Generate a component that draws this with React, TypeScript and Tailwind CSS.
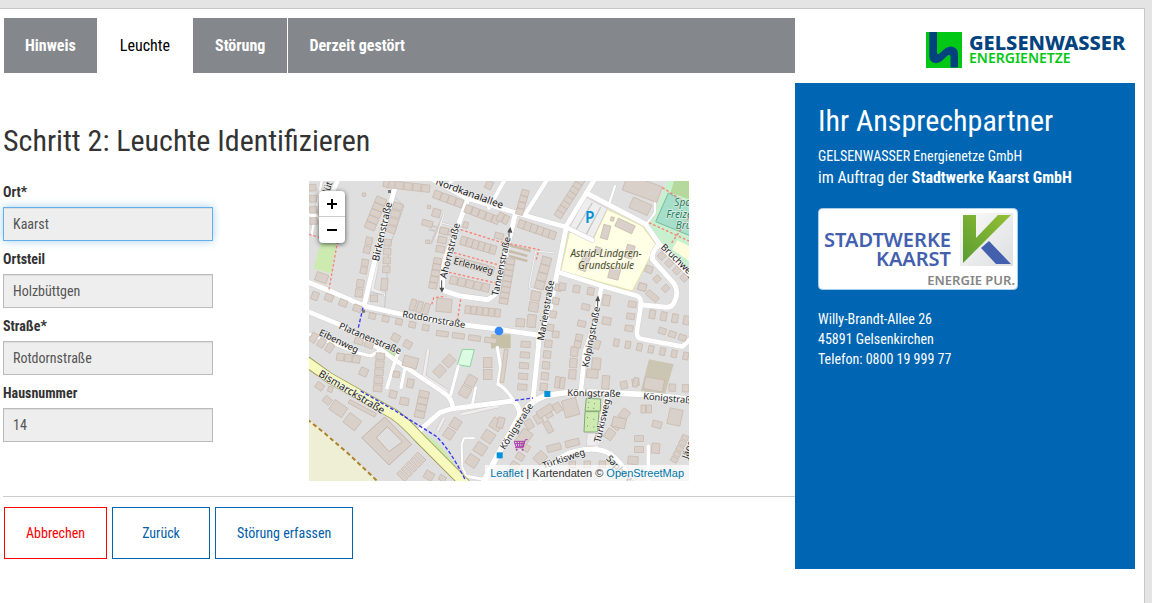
import React from "react";

type Pt = [number, number];
type Row = { from: Pt; to: Pt; n: number; w: number; h: number };

/* Map geometry is expressed in a 1140 x 900 drawing space. */
const rows: Row[] = [
  { from: [245, 10], to: [350, 22], n: 5, w: 24, h: 22 },
  { from: [385, 42], to: [450, 66], n: 4, w: 22, h: 24 },
  { from: [478, 85], to: [560, 116], n: 5, w: 20, h: 24 },
  { from: [464, 180], to: [552, 206], n: 6, w: 18, h: 26 },
  { from: [445, 240], to: [545, 268], n: 6, w: 18, h: 24 },
  { from: [434, 298], to: [530, 320], n: 5, w: 22, h: 24 },
  { from: [386, 240], to: [372, 314], n: 5, w: 24, h: 18 },
  { from: [405, 150], to: [394, 204], n: 3, w: 26, h: 20 },
  { from: [476, 386], to: [566, 396], n: 6, w: 16, h: 24 },
  { from: [215, 60], to: [184, 135], n: 5, w: 32, h: 20 },
  { from: [180, 180], to: [174, 206], n: 2, w: 20, h: 22 },
  { from: [168, 245], to: [164, 268], n: 2, w: 20, h: 20 },
  { from: [154, 308], to: [150, 336], n: 2, w: 22, h: 24 },
  { from: [266, 76], to: [246, 145], n: 4, w: 28, h: 20 },
  { from: [236, 185], to: [232, 265], n: 4, w: 22, h: 20 },
  { from: [648, 36], to: [632, 92], n: 4, w: 22, h: 18 },
  { from: [814, 0], to: [750, 100], n: 8, w: 24, h: 18 },
  { from: [638, 130], to: [730, 162], n: 6, w: 20, h: 24 },
  { from: [574, 108], to: [590, 116], n: 2, w: 16, h: 26 },
  { from: [604, 242], to: [584, 360], n: 8, w: 26, h: 17 },
  { from: [712, 240], to: [692, 312], n: 4, w: 28, h: 24 },
  { from: [680, 345], to: [674, 378], n: 2, w: 28, h: 28 },
  { from: [748, 320], to: [724, 440], n: 4, w: 20, h: 20 },
  { from: [760, 317], to: [845, 331], n: 3, w: 20, h: 22 },
  { from: [830, 378], to: [818, 428], n: 2, w: 24, h: 18 },
  { from: [970, 370], to: [960, 442], n: 3, w: 24, h: 18 },
  { from: [1020, 265], to: [1000, 318], n: 2, w: 22, h: 20 },
  { from: [1058, 225], to: [1126, 290], n: 4, w: 20, h: 20 },
  { from: [1044, 294], to: [1070, 322], n: 2, w: 20, h: 18 },
  { from: [1030, 400], to: [1132, 418], n: 4, w: 18, h: 26 },
  { from: [60, 350], to: [145, 382], n: 3, w: 24, h: 20 },
  { from: [190, 405], to: [350, 440], n: 5, w: 20, h: 18 },
  { from: [312, 372], to: [352, 384], n: 3, w: 16, h: 34 },
  { from: [14, 470], to: [62, 500], n: 3, w: 20, h: 28 },
  { from: [94, 528], to: [142, 535], n: 3, w: 22, h: 22 },
  { from: [214, 526], to: [206, 622], n: 5, w: 26, h: 20 },
  { from: [345, 640], to: [332, 700], n: 4, w: 30, h: 20 },
  { from: [420, 540], to: [392, 570], n: 2, w: 28, h: 32 },
  { from: [486, 600], to: [468, 632], n: 2, w: 30, h: 32 },
  { from: [536, 545], to: [536, 580], n: 2, w: 26, h: 30 },
  { from: [440, 728], to: [420, 758], n: 2, w: 28, h: 30 },
  { from: [400, 458], to: [545, 478], n: 4, w: 36, h: 16 },
  { from: [260, 470], to: [296, 490], n: 2, w: 24, h: 22 },
  { from: [150, 480], to: [180, 490], n: 2, w: 26, h: 20 },
  { from: [334, 830], to: [280, 885], n: 5, w: 34, h: 14 },
  { from: [562, 730], to: [490, 840], n: 4, w: 34, h: 32 },
  { from: [650, 490], to: [640, 618], n: 5, w: 28, h: 18 },
  { from: [718, 488], to: [704, 618], n: 5, w: 22, h: 22 },
  { from: [745, 604], to: [760, 606], n: 2, w: 14, h: 34 },
  { from: [796, 512], to: [790, 580], n: 3, w: 22, h: 28 },
  { from: [810, 470], to: [806, 490], n: 2, w: 20, h: 20 },
  { from: [922, 485], to: [1130, 525], n: 7, w: 16, h: 22 },
  { from: [945, 612], to: [980, 604], n: 2, w: 20, h: 22 },
  { from: [1060, 450], to: [1120, 470], n: 3, w: 22, h: 18 },
  { from: [1090, 620], to: [1130, 622], n: 2, w: 20, h: 22 },
  { from: [660, 730], to: [745, 680], n: 4, w: 22, h: 28 },
  { from: [946, 700], to: [902, 760], n: 3, w: 26, h: 30 },
  { from: [1003, 684], to: [1020, 684], n: 2, w: 14, h: 24 },
  { from: [990, 773], to: [990, 806], n: 2, w: 26, h: 18 },
  { from: [1128, 770], to: [1096, 836], n: 5, w: 20, h: 14 },
  { from: [735, 800], to: [790, 786], n: 2, w: 42, h: 20 },
  { from: [650, 800], to: [600, 880], n: 4, w: 24, h: 20 },
  { from: [790, 850], to: [880, 850], n: 3, w: 20, h: 20 },
  { from: [10, 20], to: [14, 120], n: 4, w: 22, h: 20 },
];

const singles: [number, number, number, number, number][] = [
  [165, 41, 10, 10, 10], [232, 6, 16, 24, 15], [38, 290, 36, 26, 20], [540, 12, 20, 24, 25], [360, 78, 10, 10, 10],
  [356, 182, 12, 10, 0], [355, 127, 32, 18, 15], [382, 96, 24, 24, 15], [405, 373, 46, 40, 5], [470, 132, 14, 18, 15],
  [195, 352, 22, 20, 0], [226, 310, 20, 36, 5], [18, 345, 20, 24, 20], [252, 640, 22, 22, 15], [286, 661, 26, 22, 10],
  [164, 573, 24, 24, 25], [262, 580, 20, 18, 10], [304, 543, 44, 32, 15], [304, 607, 20, 26, 10], [32, 616, 24, 20, 35],
  [88, 683, 46, 34, 35], [55, 658, 24, 20, 40], [130, 722, 44, 36, 38], [64, 625, 14, 16, 20], [160, 682, 90, 12, 28],
  [360, 884, 28, 24, 30], [400, 892, 20, 16, 30], [1000, 22, 110, 50, 20], [994, 76, 60, 34, 24], [948, 135, 56, 26, 25],
  [890, 153, 22, 42, 15], [910, 114, 10, 12, 15], [962, 212, 24, 40, 15], [916, 276, 32, 36, 15], [828, 242, 22, 56, 20],
  [868, 208, 22, 18, 20], [570, 165, 26, 18, 15], [634, 425, 26, 24, 5], [668, 420, 26, 38, 5], [892, 358, 22, 32, 10],
  [893, 420, 26, 22, 10], [1000, 318, 24, 22, 15], [1030, 345, 40, 18, 40], [585, 555, 12, 100, 8], [740, 460, 20, 20, 5],
  [862, 548, 26, 34, 5], [850, 578, 34, 26, 5], [890, 604, 22, 40, 5], [860, 490, 26, 26, 15], [1035, 610, 58, 36, 10],
  [785, 680, 44, 52, -15], [645, 770, 34, 48, 35], [708, 690, 50, 22, -32], [718, 738, 18, 36, -28], [1098, 708, 40, 48, 12],
  [1044, 730, 28, 20, 15], [930, 725, 40, 30, 12], [1040, 802, 24, 30, 5], [972, 838, 30, 24, 5], [575, 725, 20, 32, 15],
  [694, 830, 30, 34, 45], [980, 604, 14, 28, 15],
];

const roads: [string, number][] = [
  ["M0 305 L75 335 L165 375 L280 400 L450 430 L570 445 L685 462", 15],
  ["M265 -5 L205 205 L166 372", 15],
  ["M360 -10 L470 50 L620 95 L770 138 L850 177", 14],
  ["M478 50 L445 140 L402 250 L400 312 L402 328 L450 344 L538 356 L558 340 L575 280 L620 95", 15],
  ["M650 98 L715 -5", 13],
  ["M416 14 L436 -8", 10],
  ["M540 80 L585 0", 12],
  ["M770 138 L832 36 L857 -5", 15],
  ["M832 36 L1010 130 L1050 188 L1145 285", 15],
  ["M1050 188 L1032 215 L1030 235 L1095 308 Q1112 335 1095 365 Q1085 382 1065 378 L995 371", 15],
  ["M745 272 L880 315 L985 345 Q998 352 996 370 L984 450 Q982 472 998 474 L1120 497 L1143 475", 14],
  ["M772 138 L745 272 L720 400 L690 462 L688 500 L672 655", 15],
  ["M878 315 L850 450 L828 510 L815 635", 14],
  ["M522 905 L570 815 L630 708 Q665 660 705 646 Q760 632 850 633 L1000 640 L1145 655", 17],
  ["M328 752 L392 695 L425 684 L570 665 L610 660 Q630 670 632 700", 15],
  ["M565 500 L575 560 L567 610 Q598 625 632 690", 10],
  ["M0 393 L90 430 L215 505 L255 535 L400 632 Q430 650 432 682", 14],
  ["M0 460 L145 515 L185 525 L218 505", 10],
  ["M270 510 L258 540 L234 620", 11],
  ["M287 565 L276 620", 10],
  ["M448 555 L425 642", 9],
  ["M500 620 L490 670", 8],
  ["M893 650 L858 805", 14],
  ["M690 905 Q730 830 795 812 Q865 795 905 820 Q940 845 970 905", 15],
  ["M1018 795 L1018 905", 11],
  ["M465 885 L525 895", 9],
  ["M495 772 L465 772 L458 790 L460 860 L470 880", 6],
  ["M0 98 L60 125 M40 110 L85 0", 14],
  ["M38 0 L8 160", 7],
  ["M918 15 L900 70", 7],
  ["M1038 55 L1038 95 L1012 130", 7],
];

const labels: [string, number, number, number, number][] = [
  ["Nordkanalallee", 378, 10, 20, 30],
  ["Birkenstraße", 209, 242, -77, 30],
  ["Ahornstraße", 412, 294, -76, 29],
  ["Erlenweg", 432, 248, 15, 28],
  ["Tannenstraße", 567, 346, -78, 28],
  ["Rotdornstraße", 279, 408, 10, 28],
  ["Marienstraße", 704, 480, -80, 29],
  ["Kolpingstraße", 838, 560, -79, 28],
  ["Bruchweg", 1054, 200, 44, 28],
  ["Platanenstraße", 88, 442, 23, 28],
  ["Eibenweg", 28, 461, 26, 28],
  ["Bismarckstraße", 26, 584, 31, 31],
  ["Königstraße", 775, 645, 1, 28],
  ["Königstraße", 1002, 655, 5, 28],
  ["Königstraße", 587, 808, -57, 28],
  ["Türkisweg", 874, 786, -77, 28],
  ["Türkisweg", 704, 864, -19, 28],
  ["Saphirweg", 890, 834, 46, 28],
  ["Jägerweg", 1136, 835, -70, 28],
  ["lüt", 60, 38, -72, 28],
];

function Building({ x, y, w, h, a }: { x: number; y: number; w: number; h: number; a: number }) {
  return (
    <rect x={x - w / 2} y={y - h / 2} width={w} height={h} transform={`rotate(${a} ${x} ${y})`} fill="#d9d0c9" stroke="#c5b5a9" strokeWidth="2" />
  );
}

function StreetMap() {
  return (
    <svg viewBox="0 0 1140 900" className="block h-full w-full" role="img" aria-label="Karte Holzbüttgen">
      <rect width="1140" height="900" fill="#e0dfdf" />
      <path d="M0 715 L90 790 L205 900 H0Z" fill="#eeefd5" />
      <path d="M35 185 L83 185 L65 278 L13 262Z" fill="#cdebb0" />
      <path d="M1075 0 H1140 V280 L1010 150Z" fill="#c9f0ce" />
      <path d="M1095 0 H1140 V55 L1085 35Z" fill="#b5d99c" />
      <path d="M1078 36 L1145 70 V165 L1040 122Z" fill="#a5dfca" stroke="#76baa2" strokeWidth="3" />
      <path d="M1105 178 L1140 195 V240 L1090 205Z" fill="#fffddd" />
      <path d="M782 152 L850 180 L895 85 L1000 135 L1042 192 L970 330 L755 270Z" fill="#ffffe5" stroke="#e5e3a5" strokeWidth="3" />
      <path d="M830 48 L895 83 L852 172 L782 140Z" fill="#eeeeee" stroke="#d4c6c6" strokeWidth="2" />
      <path d="M850 65 L800 148 M875 78 L832 160" stroke="#c9c9c9" strokeWidth="4" />
      <path d="M1020 535 L1094 550 L1065 650 L994 635Z" fill="#cbc5b3" />
      <path d="M546 460 H605 V502 H546Z" fill="#c5c0a6" />
      <path d="M460 505 L496 506 L483 557 L445 551Z" fill="#dbfce2" stroke="#8cd5a0" strokeWidth="3" />
      <path d="M225 500 L262 520 L250 535Z" fill="#bce5a0" />
      <path d="M340 755 Q410 790 462 895 L330 770Z" fill="#cdebb0" />
      <path d="M405 98 L365 190 M395 125 L460 143 M360 132 L440 155 M360 145 L430 163" stroke="#d0cccb" strokeWidth="7" fill="none" />
      <path d="M405 98 L380 175 M395 125 L460 143" stroke="#f7f7f7" strokeWidth="3" fill="none" />
      <path d="M345 585 L358 505 M385 750 L405 710 M455 700 L570 675 M345 585 L415 630 M205 245 L190 325 L230 342" stroke="#d3c9c8" strokeWidth="12" fill="none" />
      <path d="M345 585 L358 505 M385 750 L405 710 M455 700 L570 675 M345 585 L415 630 M205 245 L190 325 L230 342" stroke="#eeeeee" strokeWidth="8" fill="none" />
      <path d="M740 216 L680 210 L660 320 L690 330" fill="none" stroke="#cacaca" strokeWidth="6" />
      <path d="M740 216 L680 210 L660 320 L690 330" fill="none" stroke="#f8f8f8" strokeWidth="3" />
      <path d="M243 35 L285 75 L240 200 L225 405 M165 390 L280 415 M180 335 L225 340" stroke="#b9b9b9" strokeWidth="2" fill="none" />
      <g fill="none" strokeLinecap="round" strokeLinejoin="round">
        {roads.map(([d, w]) => <path key={d} d={d} stroke="#cfcccb" strokeWidth={w + 2} />)}
        {roads.map(([d, w]) => <path key={d} d={d} stroke="#ffffff" strokeWidth={w} />)}
      </g>
      {rows.flatMap((r, k) => {
        const a = (Math.atan2(r.to[1] - r.from[1], r.to[0] - r.from[0]) * 180) / Math.PI;
        const tilt = a > 45 ? a - 90 : a;
        return Array.from({ length: r.n }, (_, i) => {
          const t = i / (r.n - 1);
          return (
            <Building key={`${k}-${i}`} x={r.from[0] + (r.to[0] - r.from[0]) * t} y={r.from[1] + (r.to[1] - r.from[1]) * t} w={r.w} h={r.h} a={tilt} />
          );
        });
      })}
      {singles.map(([x, y, w, h, a]) => <Building key={`${x}-${y}`} x={x} y={y} w={w} h={h} a={a} />)}
      <path fillRule="evenodd" d="M227 708 L308 790 L240 852 L158 770Z M235 737 L202 770 L240 812 L280 782Z" fill="#d9d0c9" stroke="#c5b5a9" strokeWidth="3" />
      <path d="M590 190 L665 210 M600 210 L655 225 M600 225 L655 240" stroke="#c8bba8" strokeWidth="7" />
      <path d="M-10 540 L60 590 L255 700 Q290 725 330 770 L470 910" fill="none" stroke="#9c9a4c" strokeWidth="33" />
      <path d="M-10 540 L60 590 L255 700 Q290 725 330 770 L470 910" fill="none" stroke="#f6fabf" strokeWidth="28" />
      <path d="M832 652 L875 654 L874 690 L828 690Z M828 692 L870 692 L865 753 L825 753Z" fill="#cdebb0" stroke="#83a675" strokeWidth="3" />
      <path d="M838 664h3m14 4h3m-22 12h3m14 2h3m-22 28h3m16 5h3m-22 20h3m16 3h3" stroke="#689259" strokeWidth="3" />
      <path d="M835 757 H865 V795 H832Z" fill="#eeeeee" stroke="#d7c8c8" strokeWidth="2" />
      <path d="M-5 715 L45 755 L120 820 L210 905" fill="none" stroke="#ac8327" strokeWidth="6" strokeDasharray="13 9" />
      <path d="M155 630 L260 690 L380 765 Q420 800 468 895 M162 380 L148 440 M618 658 L672 651" fill="none" stroke="#3636f5" strokeWidth="4" strokeDasharray="11 6" />
      <path d="M0 160 L85 185 L60 325 M455 146 L570 182 L690 206 L680 242 M435 215 L570 252 M420 274 L560 306 M368 370 L374 350 L410 346 M455 355 L445 420 M1060 20 L1140 70 M1020 125 L1140 180 M1140 110 L1085 190" fill="none" stroke="#fa8072" strokeWidth="4" strokeDasharray="8 6" />
      <path d="M398 298 V322 M600 185 V150 M866 385 V355" stroke="#4d4d4d" strokeWidth="3" />
      <path d="M391 320h15l-7 15z M595 154 l9-17 6 18z M859 360 l8-17 6 18z" fill="#4d4d4d" />
      <path d="M237 27h9v9h-9z M159 386h9v9h-9z" fill="#777" />
      <rect x="706" y="630" width="18" height="18" fill="#0092da" />
      <rect x="563" y="814" width="18" height="18" fill="#0092da" />
      <path d="M656 776 h-7 l-7 24 h-24 M616 781 h30 l-4 15 h-22z M624 781l2 15m6-15v15m7-15v15 M618 788h26" fill="none" stroke="#ac39ac" strokeWidth="3" />
      <circle cx="623" cy="806" r="3" fill="#ac39ac" />
      <circle cx="641" cy="806" r="3" fill="#ac39ac" />
      <g fontFamily='"Noto Sans", sans-serif' fill="#222222" stroke="#f3f3f3" strokeOpacity="0.75" strokeWidth="4" paintOrder="stroke">
        {labels.map(([t, x, y, a, s]) => (
          <text key={`${t}-${x}`} x={x} y={y} fontSize={s} transform={`rotate(${a} ${x} ${y})`}>{t}</text>
        ))}
        <g fontStyle="italic" fontSize="30">
          <text x="891" y="228" textAnchor="middle" fill="#4f4f18">Astrid-Lindgren-</text>
          <text x="891" y="263" textAnchor="middle" fill="#4f4f18">Grundschule</text>
          <g fill="#247a55">
            <text x="1096" y="76">Sportplatz</text>
            <text x="1072" y="110">Freizeit</text>
            <text x="1100" y="145">Bruch</text>
          </g>
        </g>
      </g>
      <text x="828" y="127" fontSize="46" fontWeight="600" fontFamily='"Noto Sans", sans-serif' fill="#0092da">P</text>
      <circle cx="570" cy="450" r="13" fill="#3388ff" />
    </svg>
  );
}

function GelsenwasserLogo() {
  return (
    <svg viewBox="0 0 202 36" className="h-9 w-[202px]" role="img" aria-label="Gelsenwasser Energienetze">
      <rect width="36" height="36" fill="#00c814" />
      <path d="M3.3 0 H11 V20.5 C11 22.5 12.5 22.5 14 21 L18.5 17 C24 12 32 14.5 32 22 V35.5 H24.5 V25 C24.5 22.5 22.5 22.5 21 24 L16 28.8 C10.5 33.5 3.3 31 3.3 24Z" fill="#00437e" />
      <g fontFamily='"Noto Sans", sans-serif'>
        <text x="43" y="18" fontSize="20" fontWeight="800" fill="#00437e">GELSENWASSER</text>
        <text x="43" y="31" fontSize="14" fontWeight="600" fill="#00c814">ENERGIENETZE</text>
      </g>
    </svg>
  );
}

function StadtwerkeLogo() {
  return (
    <svg viewBox="0 0 200 82" className="block h-[82px] w-[200px]" role="img" aria-label="Stadtwerke Kaarst">
      <defs>
        <linearGradient id="leaf" x1="0" y1="1" x2="1" y2="0"><stop stopColor="#5a9c32" /><stop offset="1" stopColor="#94c034" /></linearGradient>
        <linearGradient id="tile" x1="0" y1="0" x2="1" y2="1"><stop stopColor="#fafafa" /><stop offset="1" stopColor="#dedfe1" /></linearGradient>
      </defs>
      <rect x="0.5" y="0.5" width="199" height="81" rx="4" fill="#ffffff" stroke="#a9cdea" />
      <rect x="142" y="5" width="53" height="53" fill="url(#tile)" />
      <path d="M145 7 H158 V30 L180 7 H193 L145 55Z" fill="url(#leaf)" />
      <path d="M163 40 L171 33 L193 56 H178Z" fill="#4360ae" />
      <g fontFamily='"Noto Sans", sans-serif' textAnchor="end">
        <text x="133" y="39" fontSize="20" fontWeight="600" fill="#4360ae">STADTWERKE</text>
        <text x="133" y="58" fontSize="20" fontWeight="600" fill="#4360ae">KAARST</text>
        <text x="197" y="77" fontSize="13" fontWeight="600" fill="#858585">ENERGIE PUR.</text>
      </g>
    </svg>
  );
}

const fields = [
  { id: "ort", label: "Ort*", value: "Kaarst", active: true },
  { id: "ortsteil", label: "Ortsteil", value: "Holzbüttgen" },
  { id: "strasse", label: "Straße*", value: "Rotdornstraße" },
  { id: "hausnummer", label: "Hausnummer", value: "14" },
];

export default function App() {
  return (
    <div className="min-h-screen bg-[#e4e4e4] pt-2 pr-[7px] font-['Roboto_Condensed','Liberation_Sans_Narrow',Roboto,sans-serif] text-sm text-[#333]">
      <div className="flex min-h-[calc(100vh-8px)] items-start border-t border-r border-[#c8c8c8] bg-white pt-[9px] pr-[9px]">
        <main className="min-w-0 flex-1 pl-[3px]">
          <nav className="ml-px flex h-[55px] bg-[#84878c] text-base font-bold text-white">
            <a href="#hinweis" className="flex items-center px-[21px]">Hinweis</a>
            <a href="#leuchte" aria-current="page" className="flex items-center bg-white px-[23px] font-normal text-black">Leuchte</a>
            <a href="#stoerung" className="flex items-center border-r border-white px-[22px]">Störung</a>
            <a href="#gestoert" className="flex items-center px-[21px]">Derzeit gestört</a>
          </nav>
          <h1 className="mt-[50px] text-3xl leading-9">Schritt 2: Leuchte Identifizieren</h1>
          <div className="mt-[22px] flex">
            <form className="flex w-[306px] flex-col gap-2 pt-px">
              {fields.map((f) => (
                <div key={f.id} className="flex flex-col gap-[5px]">
                  <label htmlFor={f.id} className="font-bold leading-5">{f.label}</label>
                  <input
                    id={f.id}
                    readOnly
                    defaultValue={f.value}
                    className={
                      f.active
                        ? "h-[34px] w-[210px] border border-[#66afe9] bg-[#eee] px-[9px] text-[#555] shadow-[inset_0_1px_1px_rgba(0,0,0,0.075),0_0_8px_rgba(102,175,233,0.6)] outline-none"
                        : "h-[34px] w-[210px] border border-[#bbb] bg-[#eee] px-[9px] text-[#555] shadow-[inset_0_1px_1px_rgba(0,0,0,0.075)] outline-none"
                    }
                  />
                </div>
              ))}
            </form>
            <div className="relative h-[300px] w-[380px] overflow-hidden">
              <StreetMap />
              <div className="absolute top-[10px] left-[10px] flex w-[26px] flex-col overflow-hidden rounded bg-white shadow-[0_1px_5px_rgba(0,0,0,0.65)]">
                <button type="button" aria-label="Vergrößern" className="flex h-[26px] items-center justify-center border-b border-[#ccc]">
                  <svg viewBox="0 0 12 12" className="size-3"><path d="M6 1v10M1 6h10" stroke="black" strokeWidth="2" /></svg>
                </button>
                <button type="button" aria-label="Verkleinern" className="flex h-[26px] items-center justify-center">
                  <svg viewBox="0 0 12 12" className="size-3"><path d="M1 6h10" stroke="black" strokeWidth="2" /></svg>
                </button>
              </div>
              <div className="absolute right-0 bottom-0 bg-white/70 px-[5px] font-['Liberation_Sans',sans-serif] text-[11px] leading-4">
                <a href="#leaflet" className="text-[#0078a8]">Leaflet</a> | Kartendaten © <a href="#osm" className="text-[#0078a8]">OpenStreetMap</a>
              </div>
            </div>
          </div>
          <hr className="mt-[15px] border-[#ccc]" />
          <div className="mt-[10px] ml-px flex gap-[5px] text-[#005ea8]">
            <button type="button" className="h-[52px] border border-[#f00] px-[21px] text-[#f00]">Abbrechen</button>
            <button type="button" className="h-[52px] border border-[#0064b0] px-[29px]">Zurück</button>
            <button type="button" className="h-[52px] border border-[#0064b0] px-[21px]">Störung erfassen</button>
          </div>
        </main>
        <aside className="w-[340px] shrink-0">
          <div className="flex h-[65px] justify-end pt-[14px] pr-[7px]"><GelsenwasserLogo /></div>
          <section className="min-h-[486px] bg-[#0066b3] px-[23px] pt-5 text-white">
            <h2 className="text-3xl leading-9">Ihr Ansprechpartner</h2>
            <p className="mt-[7px] leading-5">GELSENWASSER Energienetze GmbH</p>
            <p className="text-base leading-6">im Auftrag der <strong>Stadtwerke Kaarst GmbH</strong></p>
            <div className="mt-[18px]"><StadtwerkeLogo /></div>
            <address className="mt-[19px] leading-5 not-italic">
              Willy-Brandt-Allee 26<br />45891 Gelsenkirchen<br />Telefon: 0800 19 999 77
            </address>
          </section>
        </aside>
      </div>
    </div>
  );
}
